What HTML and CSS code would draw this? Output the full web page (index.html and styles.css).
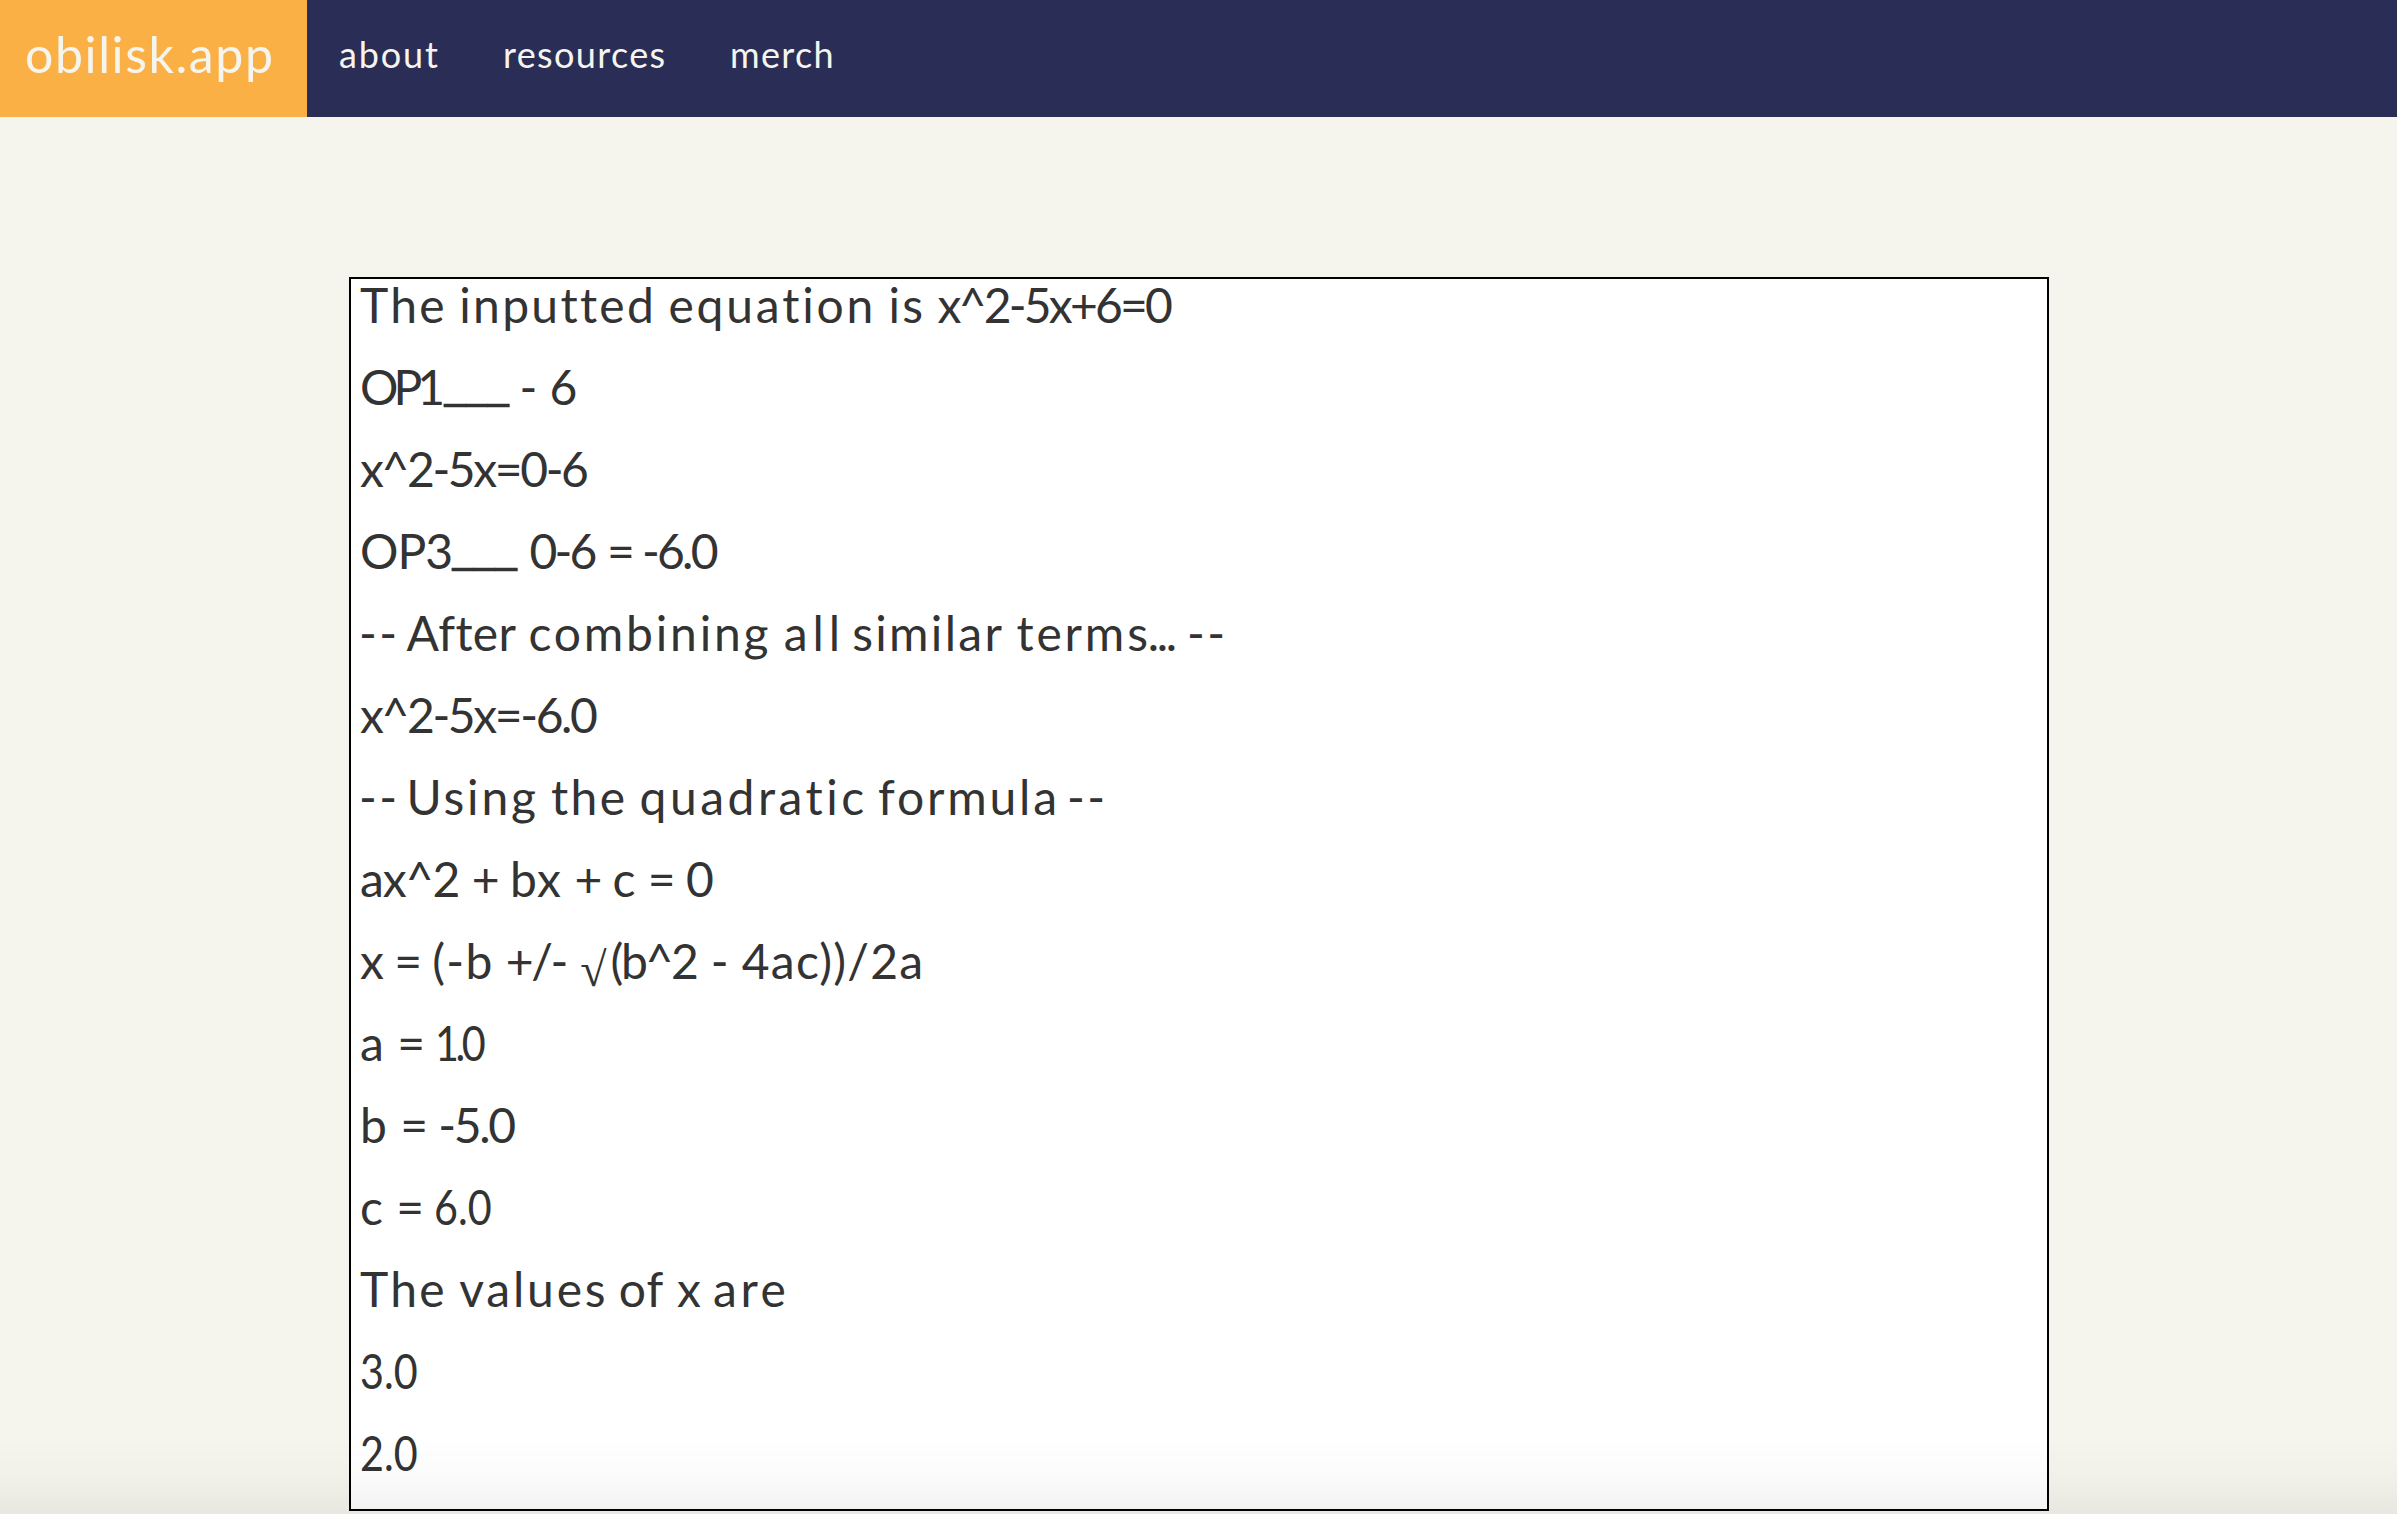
FILE: index.html
```
<!DOCTYPE html>
<html lang="en">
<head>
<meta charset="utf-8">
<title>obilisk.app</title>
<link rel="stylesheet" href="styles.css">
</head>
<body>
<nav class="nav">
  <a class="brand">obilisk.app</a>
  <a class="link about">about</a>
  <a class="link resources">resources</a>
  <a class="link">merch</a>
</nav>
<main class="steps">
  <p><span class="w2">The</span> <span class="w2">inputted</span> <span class="w3">equation</span> <span class="w2">is</span> <span class="n3">x^2-5x+6=0</span></p>
  <p><span class="one">OP1</span><span class="blank">___</span><span class="close"> </span>- 6</p>
  <p><span class="n2">x^2-5x=0-6</span></p>
  <p><span class="n1">OP3</span><span class="blank">___</span> <span class="n3">0-6</span> =<span class="tight"> </span><span class="n3">-6.0</span></p>
  <p class="dashed"><span class="w2">--</span><span class="tight"> </span><span class="w0">After</span><span class="close"> </span><span class="w3 after">combining</span> <span class="w5">all</span><span class="tight"> </span><span class="w2">similar</span> <span class="w3">terms</span><span class="dots">...</span> <span class="w2">--</span></p>
  <p><span class="n2">x^2-5x=-6.0</span></p>
  <p class="dashed"><span class="w2">--</span><span class="tight"> </span><span class="w3">Using</span> <span class="w2">the</span> <span class="w4">quadratic</span><span class="close"> </span><span class="w3">formula</span><span class="tight"> </span><span class="w2">--</span></p>
  <p><span class="n1">ax^2</span> +<span class="close"> </span><span class="w1">bx</span> +<span class="close"> </span>c =<span class="close"> </span>0</p>
  <p>x<span class="close"> </span>=<span class="close"> </span><span class="w1">(-b</span> <span class="n2">+/-</span> <span class="root">√</span><span class="n2">(b^2</span> <span class="minus">-</span> <span class="w1">4ac))/2a</span></p>
  <p><span class="result">a</span> =<span class="close"> </span><span class="narrow unit">1.0</span></p>
  <p><span class="result">b</span> =<span class="close"> </span><span class="n2">-5.0</span></p>
  <p><span class="result">c</span> =<span class="close"> </span><span class="narrow">6.0</span></p>
  <p><span class="w2">The</span> <span class="w3">values</span><span class="close"> </span><span class="w1">of</span> x <span class="w4">are</span></p>
  <p><span class="narrow">3.0</span></p>
  <p><span class="narrow">2.0</span></p>
</main>
<div class="fade"></div>
</body>
</html>
```
FILE: styles.css
```
* { box-sizing: border-box; }
body {
  margin: 0;
  height: 1514px;
  overflow: hidden;
  background: #f6f5ed;
  color: #333;
  font-family: Lato, sans-serif;
}
.nav {
  display: flex;
  height: 117px;
  background: #2a2e56;
  color: #f6f5ed;
}
.brand {
  width: 307px;
  padding-left: 25px;
  background: #fbb046;
  font-size: 50px;
  letter-spacing: 1.6px;
  line-height: 109px;
}
.link {
  padding-left: 32px;
  font-size: 36px;
  letter-spacing: 1.35px;
  line-height: 109px;
}
.about { width: 164px; letter-spacing: 1.87px; }
.resources { width: 227px; }
.steps {
  width: 1700px;
  height: 1234px;
  margin: 160px auto 0 349px;
  padding-left: 9px;
  border: 2px solid #000;
  background: #fff;
}
.steps p {
  height: 50px;
  margin: 0 0 32px;
  font-size: 48px;
  line-height: 52px;
  white-space: nowrap;
}
.steps .dashed { margin-left: -1px; }

/* tracking, wide to narrow */
.w5 { letter-spacing: 4.9px; }
.w4 { letter-spacing: 3.5px; }
.w3 { letter-spacing: 2.8px; }
.w2 { letter-spacing: 2.3px; }
.w1 { letter-spacing: 1.2px; }
.w0 { letter-spacing: .3px; }
.n1 { letter-spacing: -1px; }
.n2 { letter-spacing: -2.4px; }
.n3 { letter-spacing: -2.8px; }
.one { letter-spacing: -5px; margin-right: 4px; }
.dots { letter-spacing: -2.3px; margin-left: -3px; }
.tight { word-spacing: -5px; }
.close { word-spacing: -2px; }
.result { margin-right: 1px; }
.after { margin-left: 2px; }
.minus { margin: 0 1px 0 2px; }
.narrow {
  display: inline-block;
  transform: scaleX(.86);
  transform-origin: left;
}
.unit { letter-spacing: -4px; }
.blank {
  font: bold 39px "Liberation Sans", sans-serif;
  line-height: 0;
  vertical-align: 4px;
  text-shadow: 0 1px, 0 2px;
}
.root {
  margin: 0 4px 0 2px;
  font-family: "Liberation Serif", serif;
  line-height: 0;
  vertical-align: -7px;
}

/* shade along the window's lower edge */
.fade {
  position: fixed;
  inset: auto 0 0;
  height: 76px;
  background: linear-gradient(transparent, rgba(0, 0, 0, .015) 50%, rgba(0, 0, 0, .05));
}
```
